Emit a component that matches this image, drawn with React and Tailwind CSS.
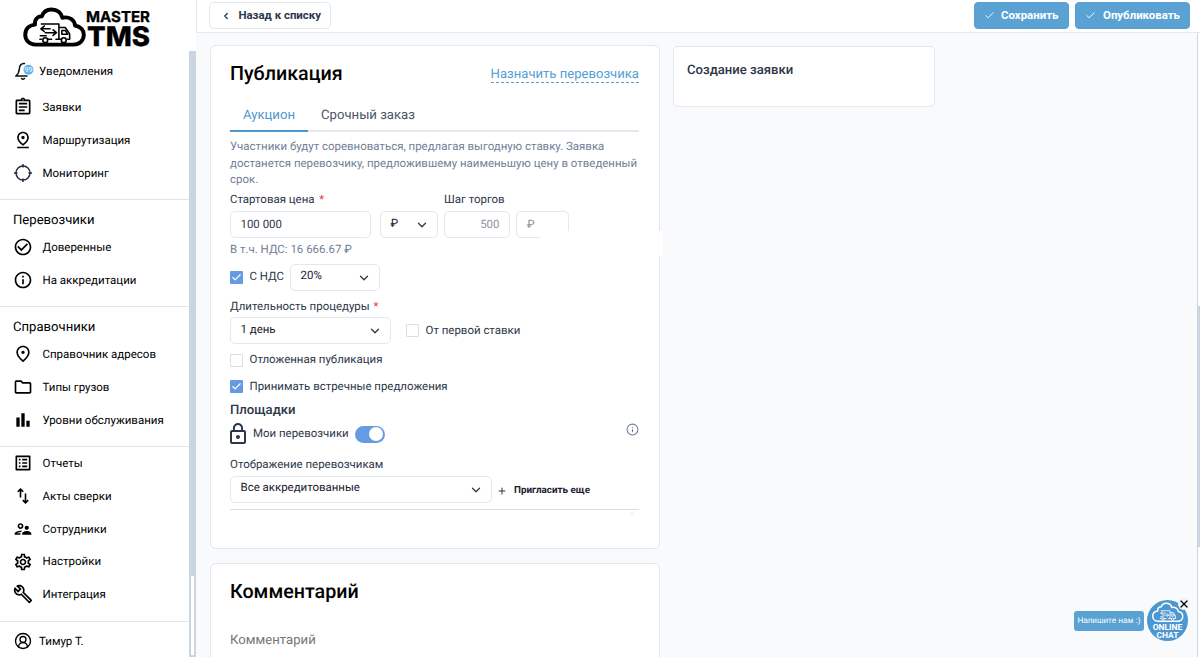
import {
    MdOutlineAssignment,
    MdOutlinePinDrop,
    MdCheckCircleOutline,
    MdInfoOutline,
    MdOutlinePlace,
    MdOutlineFolder,
    MdOutlineBarChart,
    MdOutlineListAlt,
    MdOutlineSupervisorAccount,
    MdOutlineSettings,
    MdOutlineBuild,
    MdLockOutline,
} from 'react-icons/md';
import { Check, ChevronDown, ChevronLeft, CircleUserRound, Info, Plus, X } from 'lucide-react';

function TargetIcon({ className }) {
    return (
        <svg className={className} viewBox="0 0 20 20" fill="none" stroke="#1e293b" strokeWidth="1.4">
            <circle cx="10" cy="10" r="7" />
            <path d="M10 1v3.5M10 15.5V19M1 10h3.5M15.5 10H19" />
        </svg>
    );
}

// Thin up arrow on the left, down arrow on the right
function SwapIcon({ className }) {
    return (
        <svg className={className} viewBox="0 0 20 20" fill="none" stroke="currentColor" strokeWidth="1.6">
            <path d="M7.500 11.500V3.500M4.800 5.800L7.500 3.100l2.700 2.700M12.500 7.500v9M9.800 14.100l2.700 2.700 2.700-2.700" />
        </svg>
    );
}

const groups = [
    {
        items: [
            { label: 'Заявки', icon: MdOutlineAssignment },
            { label: 'Маршрутизация', icon: MdOutlinePinDrop },
            { label: 'Мониторинг', icon: TargetIcon },
        ],
    },
    {
        title: 'Перевозчики',
        items: [
            { label: 'Доверенные', icon: MdCheckCircleOutline },
            { label: 'На аккредитации', icon: MdInfoOutline },
        ],
    },
    {
        title: 'Справочники',
        items: [
            { label: 'Справочник адресов', icon: MdOutlinePlace },
            { label: 'Типы грузов', icon: MdOutlineFolder },
            { label: 'Уровни обслуживания', icon: MdOutlineBarChart },
        ],
    },
    {
        items: [
            { label: 'Отчеты', icon: MdOutlineListAlt },
            { label: 'Акты сверки', icon: SwapIcon },
            { label: 'Сотрудники', icon: MdOutlineSupervisorAccount },
            { label: 'Настройки', icon: MdOutlineSettings },
            { label: 'Интеграция', icon: MdOutlineBuild },
        ],
    },
];

// Cloud with the truck inside, shared by the logo and the chat button
function CloudTruck({ className, strokeWidth = 4 }) {
    return (
        <svg className={className} viewBox="0 0 66 42" fill="none" stroke="currentColor" strokeLinecap="round" strokeLinejoin="round">
            <path
                strokeWidth={strokeWidth}
                d="M13 38.500C6.500 38.500 2.500 34 2.500 28.500 2.500 22.500 6.500 18.500 12.500 18 12 12.500 15 9.500 19.500 9.500 21 5 25 2.500 29.500 2.500 35.500 2.500 39.500 6 40.500 11 47.500 9.500 53 13 53.500 19 59.500 20 62.500 24 62.500 28.500 62.500 34.500 58 38.500 52 38.500Z"
            />
            <g strokeWidth="1.6">
                <path d="M19 17.500h18v15.500H34M29.500 33H26M19 33h-1.500M37 21h6.500l4.500 6.500V33h-2M38.500 33H37M40 24h3.500l2.500 4h-6z" />
                <path d="M22 19.500l-3.500 2.800 3.500 2.800M19 22.300h9M31 23.500l3.500 2.800-3.500 2.800M34 26.300h-11M18 29.500h6" />
                <circle cx="23" cy="34" r="2.500" />
                <circle cx="42" cy="34" r="2.500" />
            </g>
        </svg>
    );
}

function Logo() {
    return (
        <div className="flex h-[51px] shrink-0 pl-[22px] pt-[7px]">
            <CloudTruck className="h-[41px] w-[66px] shrink-0 text-black" />
            <svg className="-ml-[3px] h-[42px] w-[68px] overflow-visible" viewBox="0 0 68 42" fill="#000" stroke="#000" strokeWidth="0.3" fontFamily="Inter, sans-serif" fontWeight="800">
                <text x="1" y="15" fontSize="15" fontWeight="700" textLength="64" lengthAdjust="spacingAndGlyphs">MASTER</text>
                <text x="2" y="38.500" fontSize="27" textLength="63" lengthAdjust="spacingAndGlyphs">TMS</text>
            </svg>
        </div>
    );
}

function Sidebar() {
    return (
        <aside className="flex w-[189px] shrink-0 flex-col bg-white text-[11.500px] text-black">
            <Logo />
            <div className="flex h-[40px] shrink-0 items-center pl-[15px]">
                <svg className="h-[18px] w-[20px]" viewBox="0 0 20 18" fill="none" stroke="#111" strokeWidth="1.500">
                    <path d="M9 1.500C5.800 1.500 4.500 4 4.300 7c-.2 3-1 5-3.300 7h11M6.500 16.500c.8.7 2.200.7 3 0M8 1.500h1.500" strokeLinecap="round" />
                    <circle cx="13.500" cy="7.800" r="5" fill="#63b3ed" stroke="none" />
                    <text x="13.500" y="10.300" fontSize="7" textAnchor="middle" fill="#fff" stroke="none" fontFamily="Roboto">99</text>
                </svg>
                <span className="ml-[4px] pt-px">Уведомления</span>
            </div>
            {groups.map((group, i) => (
                <div key={i} className={'shrink-0 border-[#e2e4e8] ' + (i ? 'border-t' : '') + (i === 3 ? '' : ' pb-[9.500px]')}>
                    {group.title && (
                        <h3 className="flex h-[31px] items-center pl-[13px] pt-[10.500px] text-[13.100px]">{group.title}</h3>
                    )}
                    {group.items.map(({ label, icon: Icon }) => (
                        <div key={label} className="flex h-[32.800px] items-center pl-[13px]">
                            <Icon className="h-[20px] w-[20px] shrink-0" />
                            <span className="ml-[9.500px] whitespace-nowrap pt-[0.800px]">{label}</span>
                        </div>
                    ))}
                </div>
            ))}
            <div className="mt-auto flex h-[36px] shrink-0 items-center border-t border-[#e2e4e8] pl-[14px] pt-[3px]">
                <CircleUserRound className="h-[18px] w-[18px]" strokeWidth={1.800} />
                <span className="ml-[7px] pt-px">Тимур Т.</span>
            </div>
        </aside>
    );
}

function Checkbox({ checked }) {
    return checked ? (
        <span className="flex h-[13px] w-[13px] items-center justify-center rounded-[1px] bg-[#649be3]">
            <Check className="h-[11px] w-[11px] text-white" strokeWidth={2.500} />
        </span>
    ) : (
        <span className="h-[13px] w-[13px] rounded-[1px] border border-[#d8dfe9] bg-white" />
    );
}

function Select({ children, className }) {
    return (
        <div className={'flex h-[27px] items-center justify-between rounded-[5px] border border-[#e2e8f0] bg-white pl-[9.500px] pr-[8px] text-[#1a202c] ' + className}>
            <span className="pb-[2.500px]">{children}</span>
            <ChevronDown className="mt-[1px] h-[14px] w-[14px] text-[#2d3748]" strokeWidth={2.200} />
        </div>
    );
}

function Publication() {
    return (
        <section className="h-[504px] shrink-0 rounded-[6px] border border-[#e2e8f0] bg-white pl-[19.500px] pr-[19.500px] text-[11.460px] text-[#2d3748]">
            <div className="flex h-[57px] items-center justify-between">
                <h2 className="pb-[1px] text-[19.700px] font-medium text-black">Публикация</h2>
                <a className="border-b border-dashed border-[#56a0d3] pt-[2px] text-[13.100px] leading-[14px] text-[#56a0d3]">Назначить перевозчика</a>
            </div>
            <div className="flex h-[29px] border-b-2 border-[#e2e8f0] text-[13.150px]">
                <div className="flex h-[29px] w-[78px] justify-center border-b-2 border-[#4c97cf] pt-[3px] text-[#4c97cf]">Аукцион</div>
                <div className="ml-[13px] pt-[3px] text-[#4a5568]">Срочный заказ</div>
            </div>
            <p className="mt-[6px] whitespace-nowrap leading-[16.500px] text-[#718096]">
                Участники будут соревноваться, предлагая выгодную ставку. Заявка<br />
                достанется перевозчику, предложившему наименьшую цену в отведенный<br />
                срок.
            </p>
            <div className="flex pt-[3.500px]">
                <div className="w-[214px]">
                    <div className="h-[20px] leading-[16px]">Стартовая цена <span className="ml-[2px] text-[#e53e3e]">*</span></div>
                    <div className="flex gap-[9px]">
                        <div className="flex h-[27px] w-[141px] items-center rounded-[5px] border border-[#e2e8f0] pl-[9.500px]">100 000</div>
                        <Select className="w-[57.500px]">₽</Select>
                    </div>
                </div>
                <div>
                    <div className="h-[20px] leading-[16px]">Шаг торгов</div>
                    <div className="relative flex gap-[6px] text-[#8e949e]">
                        <div className="flex h-[27px] w-[66px] items-center justify-end rounded-[5px] border border-[#e2e8f0] pr-[9.500px]">500</div>
                        <div className="flex h-[27px] w-[53px] items-center rounded-[5px] border border-[#e2e8f0] pl-[10px]">₽</div>
                        <div className="absolute left-[96px] top-[20px] h-[25px] w-[123px] bg-white" />
                    </div>
                </div>
            </div>
            <div className="h-[25.500px] pt-[3px] leading-[17px] text-[#718096]">В т.ч. НДС: 16 666.67 ₽</div>
            <div className="flex items-center">
                <Checkbox checked />
                <span className="ml-[6.500px] mr-[6px]">С НДС</span>
                <Select className="w-[90px]">20%</Select>
            </div>
            <div className="h-[26.500px] pt-[7px] leading-[16px]">Длительность процедуры <span className="ml-[1px] text-[#e53e3e]">*</span></div>
            <div className="flex items-center">
                <Select className="w-[161px]">1 день</Select>
                <span className="w-[15px]" />
                <Checkbox />
                <span className="ml-[6.500px]">От первой ставки</span>
            </div>
            <div className="mt-[2.500px] flex h-[27px] items-center gap-[6.500px]">
                <Checkbox />
                Отложенная публикация
            </div>
            <div className="flex h-[26px] items-center gap-[6.500px]">
                <Checkbox checked />
                Принимать встречные предложения
            </div>
            <h4 className="h-[21px] leading-[22px] text-[13.100px] font-medium">Площадки</h4>
            <div className="flex h-[27px] items-center">
                <MdLockOutline className="-ml-[4px] h-[24px] w-[24px]" />
                <span className="ml-[3px]">Мои перевозчики</span>
                <span className="ml-[6px] flex h-[17px] w-[30px] items-center justify-end rounded-full bg-[#649be3] pr-[1.500px]">
                    <span className="h-[14px] w-[14px] rounded-full bg-white" />
                </span>
                <Info className="mb-[10px] ml-auto h-[13px] w-[13px] text-[#718096]" strokeWidth={2} />
            </div>
            <div className="h-[28px] pt-[8px] leading-[16px]">Отображение перевозчикам</div>
            <div className="flex items-center">
                <Select className="w-[262px]">Все аккредитованные</Select>
                <Plus className="ml-[5px] mt-[3px] h-[10px] w-[10px]" strokeWidth={2.500} />
                <span className="ml-[7px] mt-[5px] text-[9.850px] font-bold text-[#1a202c]">Пригласить еще</span>
            </div>
            <div className="mt-[6px] border-t border-[#d9dce1]" />
            <div className="ml-auto mr-[5px] mt-[3px] h-px w-[4px] bg-[#e2e8f0]" />
        </section>
    );
}

function TopBar() {
    return (
        <header className="flex h-[33px] shrink-0 items-start border-b border-l border-[#e2e8f0] bg-white pl-[12.400px] pr-[10px] pt-[2px]">
            <button className="flex h-[27px] w-[122px] items-center rounded-[5px] border border-[#e2e8f0] pl-[11px] text-[11.450px] font-bold text-[#2d3748]">
                <ChevronLeft className="h-[10px] w-[10px]" strokeWidth={3} />
                <span className="ml-[7px] whitespace-nowrap">Назад к списку</span>
            </button>
            <button className="ml-auto flex h-[27px] w-[95.500px] items-center rounded-[4px] border border-[#56a0d3] bg-[#5aa2d3] pl-[9px] text-[11.450px] font-bold text-white">
                <Check className="h-[11px] w-[11px]" />
                <span className="ml-[6.500px]">Сохранить</span>
            </button>
            <button className="ml-[6px] flex h-[27px] w-[115px] items-center rounded-[4px] border border-[#56a0d3] bg-[#5aa2d3] pl-[9px] text-[11.450px] font-bold text-white">
                <Check className="h-[11px] w-[11px]" />
                <span className="ml-[7px]">Опубликовать</span>
            </button>
        </header>
    );
}

function ChatWidget() {
    return (
        <div className="absolute bottom-[16px] right-[12px] flex items-center">
            <div className="flex h-[20px] w-[70px] items-center justify-center rounded-[3px] bg-[#5aa2d3] pt-[2px] font-['Liberation_Sans',sans-serif] text-[8.200px] text-white">
                Напишите нам :)
            </div>
            <div className="relative ml-[3px] flex h-[41px] w-[41px] flex-col items-center rounded-full bg-[#4c97cf] pt-[2px] text-white">
                <CloudTruck className="h-[21px] w-[34px]" strokeWidth={3} />
                <div className="pt-[0.500px] text-center text-[8.500px] font-bold leading-[8px]">ONLINE<br />CHAT</div>
                <span className="absolute -right-[2px] -top-[2px] flex h-[12px] w-[12px] items-center justify-center rounded-full bg-[#f1f3f6] text-black">
                    <X className="h-[12px] w-[12px]" strokeWidth={2.500} />
                </span>
            </div>
        </div>
    );
}

export default function App() {
    return (
        <div className="relative flex h-[657px] w-[1200px] overflow-hidden bg-[#f8fafc] font-[Roboto,sans-serif] [text-rendering:geometricPrecision]">
            <Sidebar />
            <div className="flex w-[7px] shrink-0 flex-col bg-white pt-[51px]">
                <div className="h-[525px] bg-[#cbd5e0]" />
                <div className="flex-1 border-x-2 border-b-2 border-[#cbd5e0] bg-white" />
            </div>
            <div className="flex min-w-0 flex-1 flex-col">
                <TopBar />
                <main className="flex min-h-0 flex-1">
                    <div className="ml-[13.500px] mt-[12px] flex w-[450px] flex-col gap-[14px]">
                        <Publication />
                        <section className="h-[120px] shrink-0 rounded-[6px] border border-[#e2e8f0] bg-white pl-[19.500px] pt-[13px]">
                            <h2 className="text-[19.700px] font-medium leading-[30px] text-black">Комментарий</h2>
                            <div className="mt-[24px] text-[13.150px] leading-[20px] text-[#757575]">Комментарий</div>
                        </section>
                    </div>
                    <section className="ml-[13.500px] mt-[13px] h-[61px] w-[262px] rounded-[5px] border border-[#e2e8f0] bg-white px-[13px] pt-[14px] text-[13.100px] font-medium text-[#2d3748]">
                        Создание заявки
                    </section>
                    <div className="ml-auto w-[3px] border-l border-[#cbd5e0] bg-white pt-[273px]">
                        <div className="h-[241px] bg-[#cbd5e0]" />
                    </div>
                </main>
            </div>
            <ChatWidget />
        </div>
    );
}
